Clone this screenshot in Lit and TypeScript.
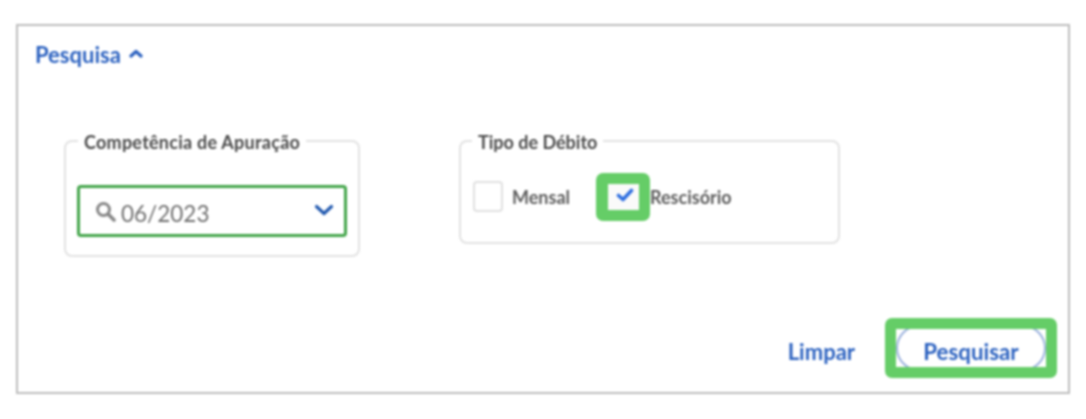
import { LitElement, html, css } from "lit";
import { customElement } from "lit/decorators.js";

@customElement("app-root")
export class AppRoot extends LitElement {
  static styles = css`
    :host { display: block; width: 1086px; height: 419px; background: #fff; overflow: hidden; font-family: Lato, "Open Sans", sans-serif; }
    * { box-sizing: border-box; }
    .page { padding: 24px 16px 0 16px; filter: blur(0.8px); }
    .panel { width: 1054px; height: 370px; border: 2px solid #bdbdbd; padding: 17px 11px 0 17px; display: flex; flex-direction: column; }
    .head { display: flex; align-items: center; gap: 8px; height: 24px; color: #2c62c0; font-size: 22px; font-weight: 700; line-height: 24px; }
    .head svg { margin-top: -4px; }
    .forms { display: flex; align-items: flex-start; gap: 99px; margin: 62px 0 0 29px; }
    fieldset { margin: 0; border: 2px solid #e2e2e2; border-radius: 8px; min-width: 0; }
    legend { padding: 3px 6px 0 6px; margin-left: 1px; color: #4a4a4a; font-size: 18px; font-weight: 700; line-height: 20px; }
    .compl { letter-spacing: 0.25px; }
    .tipol { margin-left: -1px; }
    .comp { width: 296px; height: 128px; padding: 33px 11px 0 11px; }
    .select { width: 270px; height: 52px; border: 3px solid #43a54a; border-radius: 4px; display: flex; align-items: center; padding: 0 0 0 15px; color: #6f6f6f; font-size: 22.5px; }
    .select .val { margin-left: 5px; flex: 1; padding-top: 4px; }
    .select .chev { margin-right: 10px; margin-top: -2px; }
    .tipo { width: 381px; height: 115px; padding: 14px 0 0 12px; display: flex; align-items: center; align-self: flex-start; }
    .opts { display: flex; align-items: center; margin-top: -15px; }
    .box { width: 30px; height: 31px; border: 2px solid #e0e0e0; border-radius: 4px; display: block; background: #fff; flex: none; }
    .lab { color: #5c5c5c; font-size: 18px; font-weight: 700; }
    .mensal { margin-left: 9px; margin-right: 24px; width: 60px; }
    .hl { border: 12px solid #65cd67; border-radius: 7px; flex: none; background: #fff; overflow: hidden; }
    .hlcheck { width: 54px; height: 48px; border-width: 11px 11px 11px 12px; display: flex; align-items: center; justify-content: center; }
    .tick { background: #fafafa; width: 31px; height: 26px; display: flex; align-items: center; justify-content: center; }
    .tick svg { margin: -3px 0 0 2px; }
    .actions { margin-top: auto; display: flex; align-items: center; justify-content: flex-end; padding-bottom: 14px; }
    .limpar { color: #2c62c0; font-size: 22px; font-weight: 700; margin-right: 30px; padding-top: 6px; }
    .hlbtn { width: 172px; height: 60px; border-width: 11px; }
    .btn { height: 46px; margin: -4px 0; padding-top: 6px; border: 2px solid #9db3de; border-radius: 23px; color: #2c62c0; font-size: 22.3px; font-weight: 700; display: flex; align-items: center; justify-content: center; }
  `;

  render() {
    return html`<div class="page"><div class="panel">
      <div class="head">Pesquisa
        <svg width="14" height="9" viewBox="0 0 14 9"><path d="M2 7 7 2.5 12 7" fill="none" stroke="#2c62c0" stroke-width="3.2" stroke-linecap="round" stroke-linejoin="round"/></svg>
      </div>
      <div class="forms">
        <fieldset class="comp"><legend class="compl">Competência de Apuração</legend>
          <div class="select">
            <svg width="21" height="21" viewBox="0 0 21 21"><circle cx="8.5" cy="8.5" r="6" fill="none" stroke="#888" stroke-width="3"/><path d="M13 13 19 19" stroke="#888" stroke-width="3.6" stroke-linecap="round"/></svg>
            <span class="val">06/2023</span>
            <svg class="chev" width="20" height="12" viewBox="0 0 20 12"><path d="M2.5 2.5 10 9.5 17.5 2.5" fill="none" stroke="#245bb0" stroke-width="3.2" stroke-linecap="round" stroke-linejoin="round"/></svg>
          </div>
        </fieldset>
        <fieldset class="tipo"><legend class="tipol">Tipo de Débito</legend>
          <div class="opts">
            <span class="box"></span><span class="lab mensal">Mensal</span>
            <div class="hl hlcheck"><div class="tick">
              <svg width="18" height="14" viewBox="0 0 18 14"><path d="M2.5 7.5 7 11.5 15.5 2.5" fill="none" stroke="#2f6fe0" stroke-width="3.6" stroke-linecap="round" stroke-linejoin="round"/></svg>
            </div></div>
            <span class="lab">Rescisório</span>
          </div>
        </fieldset>
      </div>
      <div class="actions">
        <span class="limpar">Limpar</span>
        <div class="hl hlbtn"><div class="btn">Pesquisar</div></div>
      </div>
    </div></div>`;
  }
}
